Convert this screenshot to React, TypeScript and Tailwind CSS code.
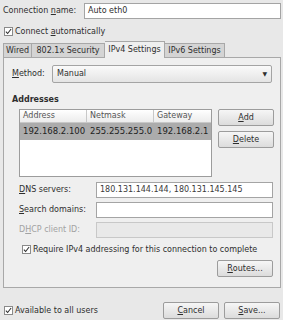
import React from 'react';

const Check: React.FC = () => (
  <span className="flex h-[9px] w-[9px] shrink-0 items-center justify-center border border-[#8a8a8a] bg-white">
    <svg viewBox="0 0 8 8" className="h-[7px] w-[7px]">
      <path d="M1 4.2 L3 6.3 L7 1.2" fill="none" stroke="#2e2e2e" strokeWidth="1.2" />
    </svg>
  </span>
);

const Btn: React.FC<{ children: React.ReactNode; className?: string }> = ({ children, className = '' }) => (
  <div
    className={`flex h-[17px] w-[56px] items-center justify-center rounded-[2px] border border-[#9c9c9c] bg-gradient-to-b from-[#f6f6f6] to-[#dcdcdc] text-[#2e2e2e] ${className}`}
  >
    {children}
  </div>
);

const Field: React.FC<{ value?: string; disabled?: boolean }> = ({ value = '', disabled }) => (
  <div
    className={`flex h-[16px] w-[177px] items-center border px-[3px] ${
      disabled ? 'border-[#c8c8c8] bg-[#e9e9e9]' : 'border-[#a4a4a4] bg-white'
    } text-[#3a3a3a]`}
  >
    {value}
  </div>
);

export default function App() {
  return (
    <div className="h-[320px] w-[283px] overflow-hidden bg-[#e8e8e8] font-['DejaVu_Sans',sans-serif] text-[8px] leading-none text-[#2e2e2e]">
      {/* connection name */}
      <div className="flex h-[16px] items-center pt-0 mt-[3px]">
        <span className="w-[84px] pl-[3px]">
          Connection <u>n</u>ame:
        </span>
        <div className="flex h-[16px] w-[197px] items-center border border-[#a4a4a4] bg-white px-[3px] text-[#2e2e2e]">
          Auto eth0
        </div>
      </div>

      <div className="mt-[8px] flex h-[9px] items-center gap-[2px] pl-[4px]">
        <Check />
        <span>
          Connect <u>a</u>utomatically
        </span>
      </div>

      {/* tabs */}
      <div className="mt-[5px] flex h-[16px] items-end pl-[3px]">
        <div className="flex h-[14px] w-[29px] items-center justify-center border border-b-0 border-[#a8a8a8] bg-[#d4d4d4]">
          Wired
        </div>
        <div className="flex h-[14px] w-[73px] items-center justify-center border border-b-0 border-l-0 border-[#a8a8a8] bg-[#d4d4d4]">
          802.1x Security
        </div>
        <div className="relative z-10 -mb-px flex h-[17px] w-[60px] items-center justify-center border border-b-0 border-l-0 border-[#a8a8a8] bg-[#efefef]">
          IPv4 Settings
        </div>
        <div className="flex h-[14px] w-[60px] items-center justify-center border border-b-0 border-l-0 border-[#a8a8a8] bg-[#d4d4d4]">
          IPv6 Settings
        </div>
      </div>

      {/* panel */}
      <div className="ml-[3px] h-[231px] w-[278px] border border-[#a8a8a8] bg-[#efefef]">
        <div className="mt-[7px] flex h-[18px] items-center">
          <span className="w-[48px] pl-[8px]">
            <u>M</u>ethod:
          </span>
          <div className="flex h-[18px] w-[220px] items-center justify-between rounded-[2px] border border-[#a4a4a4] bg-gradient-to-b from-[#fafafa] to-[#e4e4e4] px-[4px]">
            <span>Manual</span>
            <span className="text-[6px]">▼</span>
          </div>
        </div>

        <div className="mt-[13px] pl-[8px] font-bold">Addresses</div>

        <div className="mt-[5px] flex">
          <div className="ml-[15px] h-[68px] w-[193px] border border-[#9c9c9c] bg-white">
            <div className="flex h-[13px] border-b border-[#c8c8c8] bg-gradient-to-b from-white to-[#ececec] text-[#555]">
              <div className="flex w-[67px] items-center border-r border-[#c8c8c8] pl-[3px]">Address</div>
              <div className="flex w-[67px] items-center border-r border-[#c8c8c8] pl-[3px]">Netmask</div>
              <div className="flex flex-1 items-center pl-[3px]">Gateway</div>
            </div>
            <div className="flex h-[17px] items-center bg-[#acacac] text-[8.5px] text-[#222]">
              <div className="w-[67px] pl-[3px]">192.168.2.100</div>
              <div className="w-[67px] pl-[3px]">255.255.255.0</div>
              <div className="flex-1 pl-[3px]">192.168.2.1</div>
            </div>
          </div>
          <div className="ml-[6px] flex flex-col gap-[5px]">
            <Btn>
              <u>A</u>dd
            </Btn>
            <Btn>
              <u>D</u>elete
            </Btn>
          </div>
        </div>

        <div className="mt-[5px] flex flex-col gap-[4px] pl-[15px]">
          <div className="flex h-[16px] items-center">
            <span className="w-[77px]">
              <u>D</u>NS servers:
            </span>
            <Field value="180.131.144.144, 180.131.145.145" />
          </div>
          <div className="flex h-[16px] items-center">
            <span className="w-[77px]">
              <u>S</u>earch domains:
            </span>
            <Field />
          </div>
          <div className="flex h-[16px] items-center">
            <span className="w-[77px] text-[#a2a2a2]">
              D<u>H</u>CP client ID:
            </span>
            <Field disabled />
          </div>
        </div>

        <div className="mt-[7px] flex h-[9px] items-center gap-[2px] pl-[18px]">
          <Check />
          <span>Require IPv4 addressing for this connection to complete</span>
        </div>

        <div className="mt-[6px] flex justify-end pr-[7px]">
          <Btn>
            <u>R</u>outes...
          </Btn>
        </div>
      </div>

      {/* footer */}
      <div className="mt-[14px] flex h-[17px] items-center">
        <div className="flex items-center gap-[2px] pl-[4px]">
          <Check />
          <span>Available to all users</span>
        </div>
        <div className="ml-auto flex gap-[5px] pr-[3px]">
          <Btn>
            <u>C</u>ancel
          </Btn>
          <Btn>
            <u>S</u>ave...
          </Btn>
        </div>
      </div>
    </div>
  );
}
